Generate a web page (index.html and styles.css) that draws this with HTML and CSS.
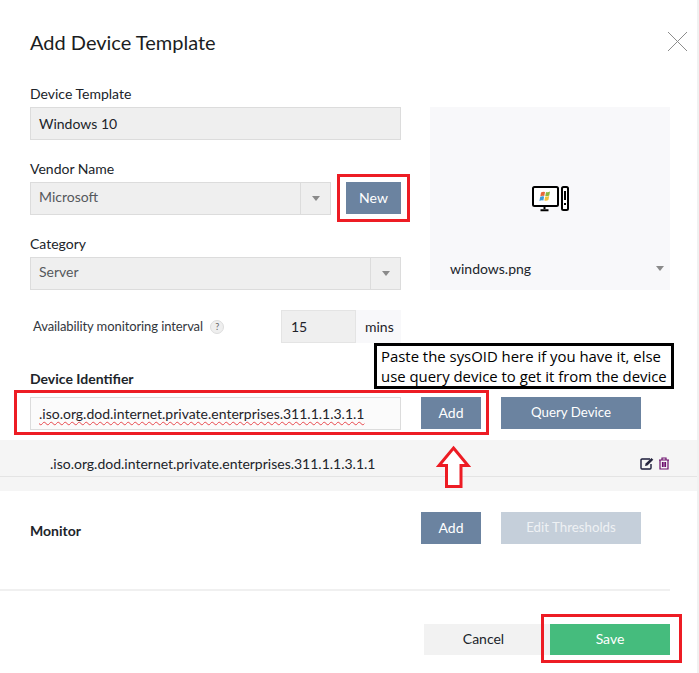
FILE: index.html
```html
<!DOCTYPE html>
<html lang="en">
<head>
<meta charset="utf-8">
<title>Add Device Template</title>
<link rel="stylesheet" href="styles.css">
</head>
<body>
<main class="modal">
  <header class="head">
    <h1 class="title">Add Device Template</h1>
    <svg class="close" width="20" height="20" viewBox="0 0 20 20"><path d="M0 0L19 19M19 0L0 19" stroke="#8c8c8c" stroke-width="1" fill="none"/></svg>
  </header>

  <div class="top">
    <div class="fields">
      <div class="field">
        <div class="label">Device Template</div>
        <div class="box text-dark">Windows 10</div>
      </div>
      <div class="field">
        <div class="label">Vendor Name</div>
        <div class="vendor">
          <div class="select select-short"><span class="select-value">Microsoft</span><span class="select-arrow"><i class="caret"></i></span></div>
          <button class="btn btn-new">New</button>
        </div>
      </div>
      <div class="field">
        <div class="label">Category</div>
        <div class="select"><span class="select-value">Server</span><span class="select-arrow"><i class="caret"></i></span></div>
      </div>
    </div>
    <aside class="preview">
      <div class="preview-icon">
        <svg width="37" height="26" viewBox="0 0 37 26">
          <rect x="1" y="1" width="25" height="19" rx="1.5" fill="#fff" stroke="#000" stroke-width="2"/>
          <path d="M12.5 20v3M8.5 24.2h8" stroke="#000" stroke-width="2" fill="none"/>
          <rect x="30" y="1" width="6" height="23" rx="1.5" fill="#fff" stroke="#000" stroke-width="2"/>
          <path d="M33 5v9M33 17v2" stroke="#000" stroke-width="2" fill="none"/>
          <path d="M9 6.500q2-1.300 4-.5l-.7 4q-2-.8-4 .5z" fill="#e8683a"/>
          <path d="M14 6q2 .8 4-.5l-.7 4q-2 1.300-4 .5z" fill="#8ab83e"/>
          <path d="M8.200 11q2-1.300 3.900-.5l-.7 4q-2-.8-4 .5z" fill="#3d9ad8"/>
          <path d="M13.200 10.500q2 .8 4-.5l-.8 4q-2 1.300-4 .5z" fill="#f3c13a"/>
        </svg>
      </div>
      <div class="preview-foot"><span>windows.png</span><i class="caret"></i></div>
    </aside>
  </div>

  <div class="interval">
    <div class="interval-label">Availability monitoring interval <span class="help">?</span></div>
    <div class="interval-value">15</div>
    <div class="interval-unit">mins</div>
  </div>

  <div class="section-label">Device Identifier</div>
  <div class="id-row">
    <div class="box id-input"><span class="squiggle">.iso.org.dod.internet.private.enterprises.311.1.1.3.1.1</span></div>
    <button class="btn btn-add">Add</button>
    <button class="btn btn-wide">Query Device</button>
  </div>

  <div class="oid-band">
    <div class="oid-row">
      <span>.iso.org.dod.internet.private.enterprises.311.1.1.3.1.1</span>
      <span class="oid-actions">
        <svg width="15" height="13" viewBox="0 0 15 13"><path d="M10 2H2a1 1 0 0 0-1 1v8a1 1 0 0 0 1 1h8a1 1 0 0 0 1-1V7" fill="none" stroke="#1b1b3a" stroke-width="1.400"/><path d="M5 9l.6-2.400L11.500 1l1.800 1.800L7.400 8.400z" fill="#26263f"/></svg>
        <svg width="12" height="13" viewBox="0 0 12 13"><path d="M1 3h10M4 3V1h4v2M2 3v9h8V3M4.500 5v5M6 5v5M7.500 5v5" fill="none" stroke="#6d0f6d" stroke-width="1.200"/></svg>
      </span>
    </div>
  </div>

  <div class="monitor-row">
    <div class="monitor-label">Monitor</div>
    <button class="btn btn-add">Add</button>
    <button class="btn btn-wide btn-disabled">Edit Thresholds</button>
  </div>

  <footer class="foot">
    <button class="btn btn-cancel">Cancel</button>
    <button class="btn btn-save">Save</button>
  </footer>

  <div class="mark mark-new"></div>
  <div class="mark mark-id"></div>
  <div class="mark mark-save"></div>
  <div class="callout">Paste the sysOID here if you have it, else<br>use query device to get it from the device</div>
  <svg class="arrow" width="38" height="44" viewBox="0 0 38 44"><path d="M18.500 3L33 20.500H26V41.500H11.500V20.500H4z" fill="#fff" stroke="#ed1c24" stroke-width="3"/></svg>
</main>
</body>
</html>
```
FILE: styles.css
```css
* { box-sizing: border-box; }
html, body { margin: 0; padding: 0; }
body { background: #fff; font-family: Lato, "Liberation Sans", sans-serif; color: #1f2329; font-size: 14px; }

.modal { position: relative; width: 699px; height: 673px; overflow: hidden; border-right: 2px solid #f1f1f1; padding-top: 29px; }

.head { display: flex; justify-content: space-between; padding: 0 9px 0 30px; height: 27px; }
.title { margin: 0; font-size: 20px; font-weight: 400; line-height: 26px; color: #1a1d22; }
.close { margin-top: 3px; }

.top { display: flex; margin: 29px 0 0 30px; }
.fields { width: 371px; }
.field { margin-bottom: 20px; }
.field:last-child { margin-bottom: 0; }
.label { height: 18px; line-height: 18px; margin-bottom: 4px; font-size: 14px; color: #20242a; }

.box { height: 33px; border: 1px solid #dcdcdc; background: #efefef; padding-left: 8px; line-height: 31px; font-size: 14px; }
.text-dark { color: #20242a; }

.vendor { display: flex; justify-content: space-between; align-items: flex-start; }
.select { display: flex; height: 33px; border: 1px solid #dcdcdc; background: #efefef; color: #55585c; font-size: 14px; line-height: 27px; }
.select-short { width: 301px; }
.select-value { flex: 1; padding-left: 8px; }
.select-arrow { width: 30px; border-left: 1px solid #dcdcdc; display: flex; align-items: center; justify-content: center; }
.caret { display: block; width: 0; height: 0; border-left: 4px solid transparent; border-right: 4px solid transparent; border-top: 5px solid #8a8a8a; }

.btn { display: block; border: 0; padding: 0 0 2px; margin: 0; font-family: inherit; font-size: 14px; font-weight: 400; color: #fff; background: #6b83a0; height: 32px; text-align: center; }
.btn-new { width: 55px; }
.btn-add { width: 60px; }
.btn-wide { width: 140px; font-size: 13.300px; }
.btn-disabled { background: #c5cfda; color: #eef1f4; }

.preview { width: 240px; height: 183px; margin: 22px 0 0 29px; background: #f8f8fa; display: flex; flex-direction: column; }
.preview-icon { height: 149px; padding: 79px 0 0 102px; }
.preview-icon svg { display: block; }
.preview-foot { display: flex; justify-content: space-between; align-items: center; padding: 0 6px 0 20px; height: 24px; font-size: 14px; color: #20242a; }

.interval { display: flex; margin: 20px 0 0 33px; height: 33px; width: 368px; }
.interval-label { width: 248px; font-size: 13px; line-height: 33px; color: #33373d; letter-spacing: -.1px; }
.help { display: inline-block; width: 14px; height: 14px; margin-left: 4px; border: 1px solid #ddd; border-radius: 50%; background: #efefef; color: #666; font-size: 9px; line-height: 12px; text-align: center; vertical-align: 1px; letter-spacing: 0; }
.interval-value { width: 75px; border: 1px solid #e4e4e4; background: #efefef; padding-left: 9px; line-height: 31px; font-size: 14px; }
.interval-unit { width: 45px; background: #f8f8fa; padding-left: 9px; line-height: 33px; font-size: 14px; }

.section-label { margin: 27px 0 9px 30px; height: 18px; line-height: 18px; font-size: 14px; font-weight: 700; color: #20242a; }

.id-row { display: flex; align-items: flex-start; margin-left: 30px; gap: 20px; }
.id-input { width: 371px; background: #fbfbfb; }
.squiggle { text-decoration: underline wavy #e8474c 1px; text-underline-offset: 2px; text-decoration-skip-ink: none; }

.oid-band { margin-top: 10px; height: 51px; background: #f5f5f5; }
.oid-row { display: flex; justify-content: space-between; align-items: center; height: 37px; padding: 11px 27px 0 50px; border-bottom: 1px solid #e4e4e4; font-size: 14px; color: #20242a; }
.oid-actions { display: flex; gap: 3px; align-items: center; }

.monitor-row { display: flex; align-items: flex-start; margin: 21px 0 0 30px; gap: 20px; }
.monitor-label { width: 371px; padding-top: 10px; font-size: 14px; font-weight: 700; color: #20242a; }

.foot { display: flex; justify-content: flex-end; width: 670px; margin-top: 45px; padding-top: 33px; border-top: 2px solid #f0f0f0; }
.btn-cancel { width: 126px; height: 31px; padding-right: 7px; background: #f2f2f2; color: #20242a; }
.btn-save { width: 120px; height: 31px; background: #45bc7d; }

.mark { position: absolute; border: 3px solid #ed1c24; }
.mark-new { left: 337px; top: 174px; width: 73px; height: 48px; }
.mark-id { left: 14px; top: 390px; width: 475px; height: 45px; }
.mark-save { left: 541px; top: 614px; width: 141px; height: 49px; }

.callout { position: absolute; left: 374px; top: 343px; width: 300px; height: 46px; border: 3px solid #000; background: #fff; padding-left: 4px; font-family: "Open Sans", "Noto Sans", sans-serif; font-size: 14.900px; line-height: 20px; color: #000; white-space: nowrap; }
.arrow { position: absolute; left: 435px; top: 445px; }
```
